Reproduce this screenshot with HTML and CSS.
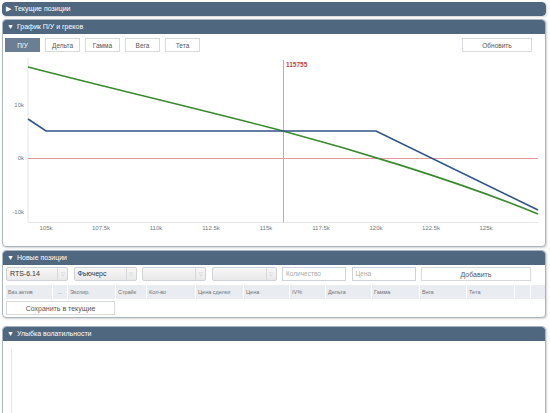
FILE: index.html
```html
<!DOCTYPE html>
<html>
<head>
<meta charset="utf-8">
<link rel="stylesheet" href="styles.css">
</head>
<body>
<div class="panel collapsed">
  <div class="ph"><span class="tri">▶</span>Текущие позиции</div>
</div>

<div class="panel p-chart">
  <div class="ph"><span class="tri">▼</span>График П/У и греков</div>
  <div class="pb">
    <div class="tabs">
      <div class="tabgroup">
        <span class="tab active">П/У</span>
        <span class="tab">Дельта</span>
        <span class="tab">Гамма</span>
        <span class="tab">Вега</span>
        <span class="tab">Тета</span>
      </div>
      <span class="btn refresh">Обновить</span>
    </div>
    <svg class="chart" width="542" height="192" viewBox="0 0 542 192">
      <line x1="25" y1="6" x2="25" y2="170" stroke="#e3e6ea" stroke-width="1"/>
      <line x1="25" y1="170.5" x2="535" y2="170.5" stroke="#e3e6ea" stroke-width="1"/>
      <line x1="25" y1="106.5" x2="535" y2="106.5" stroke="#e39a9a" stroke-width="1"/>
      <line x1="280.5" y1="8" x2="280.5" y2="170" stroke="#e39a9a" stroke-width="1"/>
      <text x="283" y="15" class="mark">115755</text>
      <g class="yl">
        <text x="21" y="55">10k</text>
        <text x="21" y="108">0k</text>
        <text x="21" y="162">-10k</text>
      </g>
      <g class="xl">
        <text x="43" y="178">105k</text>
        <text x="98" y="178">107.5k</text>
        <text x="153" y="178">110k</text>
        <text x="208" y="178">112.5k</text>
        <text x="263" y="178">115k</text>
        <text x="318" y="178">117.5k</text>
        <text x="373" y="178">120k</text>
        <text x="428" y="178">122.5k</text>
        <text x="483" y="178">125k</text>
      </g>
      <path d="M25 15 C110 37, 200 58, 280 79 C340 95, 450 127, 535 162" fill="none" stroke="#3a8a2e" stroke-width="1.6"/>
      <polyline points="25,67 43,79 373,79 535,158" fill="none" stroke="#2f5485" stroke-width="1.6"/>
    </svg>
  </div>
</div>

<div class="panel p-new">
  <div class="ph"><span class="tri">▼</span>Новые позиции</div>
  <div class="pb">
    <div class="controls">
      <div class="sel"><span class="val">RTS-6.14</span><span class="arr">▽</span></div>
      <div class="sel"><span class="val">Фьючерс</span><span class="arr">▽</span></div>
      <div class="sel"><span class="val"></span><span class="arr">▽</span></div>
      <div class="sel"><span class="val"></span><span class="arr">▽</span></div>
      <div class="inp">Количество</div>
      <div class="inp">Цена</div>
      <div class="btn add">Добавить</div>
    </div>
    <div class="thead">
      <span>Баз.актив</span>
      <span class="c">...</span>
      <span>Экспир.</span>
      <span>Страйк</span>
      <span>Кол-во</span>
      <span>Цена сделки</span>
      <span>Цена</span>
      <span>IV%</span>
      <span>Дельта</span>
      <span>Гамма</span>
      <span>Вега</span>
      <span>Тета</span>
      <span></span>
    </div>
    <div class="btn save">Сохранить в текущие</div>
  </div>
</div>

<div class="panel p-smile">
  <div class="ph"><span class="tri">▼</span>Улыбка волатильности</div>
  <div class="pb">
    <div class="smile-axis"></div>
  </div>
</div>
</body>
</html>
```

FILE: styles.css
```css
* { box-sizing: border-box; }
html, body { margin: 0; padding: 0; background: #fff; }
body {
  padding: 2px 4px 0 2px;
  font-family: "Liberation Sans", Arial, sans-serif;
  color: #555;
  overflow: hidden;
  height: 413px;
}
.panel {
  border: 1px solid #aab5c2;
  border-radius: 4px;
  box-shadow: 1px 1px 2px rgba(0,0,0,0.18);
  background: #fff;
  overflow: hidden;
}
.panel.collapsed { border: none; }
.ph {
  height: 14px;
  line-height: 14px;
  background: #506780;
  color: #fff;
  font-size: 7px;
  padding-left: 4px;
  border-radius: 3px 3px 0 0;
}
.collapsed .ph { border-radius: 4px; }
.tri { font-size: 7px; margin-right: 3px; }
.p-chart { margin-top: 3px; height: 228px; }
.p-new { margin-top: 3px; height: 68px; }
.p-smile { margin-top: 8px; height: 100px; }

.tabs {
  display: flex;
  justify-content: space-between;
  padding: 4px 13px 0 2px;
  height: 18px;
}
.tabgroup { display: flex; gap: 5px; }
.tab, .btn {
  display: flex;
  align-items: center;
  justify-content: center;
  height: 14px;
  border: 1px solid #d7d9dc;
  background: #fff;
  font-size: 6.5px;
  color: #555;
}
.tab { width: 35px; }
.tab.active { background: #6a7e94; border-color: #6a7e94; color: #fff; }
.refresh { width: 70px; }
.chart { display: block; }
.chart text { font-family: "Liberation Sans", Arial, sans-serif; font-size: 6px; fill: #777; }
.chart .yl text { text-anchor: end; }
.chart .xl text { text-anchor: middle; }
.chart .mark { fill: #c0464a; font-weight: bold; font-size: 6.5px; }

.p-new .pb { padding: 2px 0 0 3px; }
.controls {
  display: grid;
  grid-template-columns: 62px 63px 64px 65px 64px 64px 110px;
  column-gap: 5.5px;
  height: 14px;
}
.sel {
  display: flex;
  border: 1px solid #cfd2d6;
  border-radius: 2px;
  background: linear-gradient(#f7f7f7, #e9e9e9);
  font-size: 7px;
  color: #333;
}
.sel .val { flex: 1; line-height: 12px; padding-left: 3px; }
.sel .arr {
  width: 10px;
  border-left: 1px solid #d5d7da;
  color: #b9bcc0;
  font-size: 5px;
  line-height: 12px;
  text-align: center;
}
.inp {
  border: 1px solid #cfd2d6;
  font-size: 6.5px;
  color: #aaa;
  line-height: 12px;
  padding-left: 3px;
}
.thead {
  display: grid;
  grid-template-columns: 47px 15px 48px 31px 49px 48px 46px 36px 46px 48px 47px 48px 16px;
  margin-top: 4px;
  height: 14px;
  background: #e9ecf0;
}
.thead span {
  font-size: 5.5px;
  color: #6f747a;
  line-height: 14px;
  padding-left: 2px;
  border-right: 1px solid #fff;
  white-space: nowrap;
  overflow: hidden;
}
.thead .c { text-align: center; padding-left: 0; }
.save { width: 109px; margin-top: 2px; font-size: 7px; }
.add { font-size: 7px; }

.p-smile .pb { padding: 8px 0 0 8px; height: 100px; }
.smile-axis { width: 1px; height: 80px; background: #e3e6ea; }
```
